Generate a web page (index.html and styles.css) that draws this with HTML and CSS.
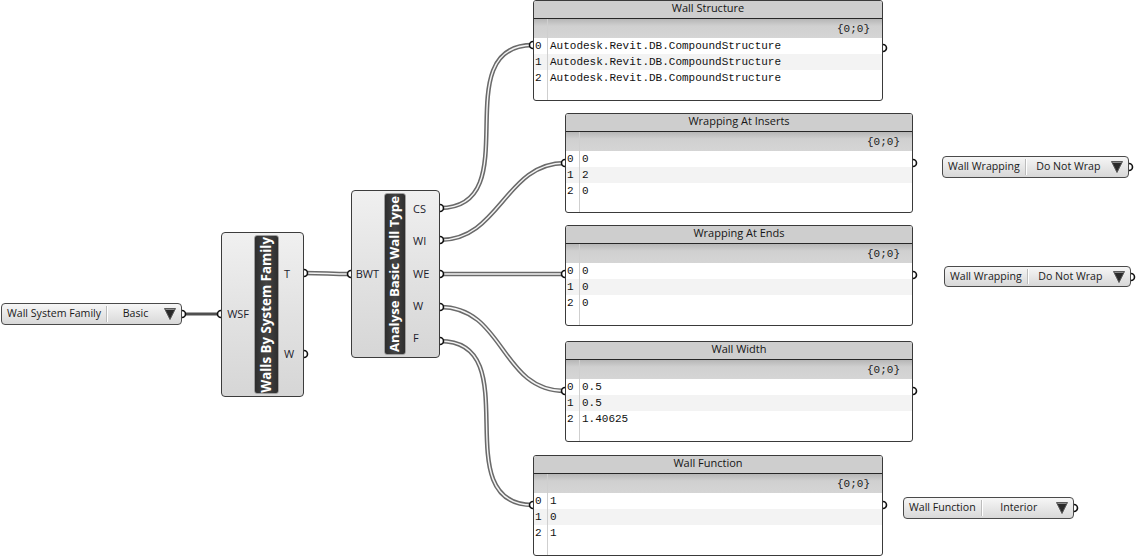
FILE: index.html
```html
<!DOCTYPE html>
<html>
<head>
<meta charset="utf-8">
<link rel="stylesheet" href="styles.css">
</head>
<body>
<div class="canvas">
  <svg class="layer wires" width="1137" height="556" viewBox="0 0 1137 556">
    <path class="w-single" d="M182,314 L220,314"/>
    <g class="w-outer">
      <path d="M304,273 C327,273 328,274 351,274"/>
      <path d="M440,208 C530,208 443,45 533,45"/>
      <path d="M440,240 C500,240 505,163 565,163"/>
      <path d="M440,274 L565,274"/>
      <path d="M440,307 C505,307 500,391 565,391"/>
      <path d="M440,341 C530,341 443,505 533,505"/>
    </g>
    <g class="w-inner">
      <path d="M304,273 C327,273 328,274 351,274"/>
      <path d="M440,208 C530,208 443,45 533,45"/>
      <path d="M440,240 C500,240 505,163 565,163"/>
      <path d="M440,274 L565,274"/>
      <path d="M440,307 C505,307 500,391 565,391"/>
      <path d="M440,341 C530,341 443,505 533,505"/>
    </g>
  </svg>

  <div class="node vlist v-wsf">
    <span class="v-name">Wall System Family</span>
    <span class="v-sep"></span>
    <span class="v-val">Basic</span>
    <svg class="v-tri" viewBox="0 0 12 12"><polygon points="0.5,0.5 11.5,0.5 6,11.5"/><polyline points="1.5,1.5 10.5,1.5"/></svg>
  </div>

  <div class="node comp c-wbsf">
    <div class="c-in"><span>WSF</span></div>
    <div class="c-label"><span>Walls By System Family</span></div>
    <div class="c-out"><span>T</span><span>W</span></div>
  </div>

  <div class="node comp c-abwt">
    <div class="c-in"><span>BWT</span></div>
    <div class="c-label"><span>Analyse Basic Wall Type</span></div>
    <div class="c-out"><span>CS</span><span>WI</span><span>WE</span><span>W</span><span>F</span></div>
  </div>

  <div class="node panel p-structure">
    <div class="p-title">Wall Structure</div>
    <div class="p-path"><span class="p-idx"></span><span class="p-pathtxt">{0;0}</span></div>
    <div class="p-row"><span class="p-idx">0</span><span class="p-val">Autodesk.Revit.DB.CompoundStructure</span></div>
    <div class="p-row"><span class="p-idx">1</span><span class="p-val">Autodesk.Revit.DB.CompoundStructure</span></div>
    <div class="p-row"><span class="p-idx">2</span><span class="p-val">Autodesk.Revit.DB.CompoundStructure</span></div>
    <div class="p-row p-fill"><span class="p-idx"></span></div>
  </div>

  <div class="node panel p-inserts">
    <div class="p-title">Wrapping At Inserts</div>
    <div class="p-path"><span class="p-idx"></span><span class="p-pathtxt">{0;0}</span></div>
    <div class="p-row"><span class="p-idx">0</span><span class="p-val">0</span></div>
    <div class="p-row"><span class="p-idx">1</span><span class="p-val">2</span></div>
    <div class="p-row"><span class="p-idx">2</span><span class="p-val">0</span></div>
    <div class="p-row p-fill"><span class="p-idx"></span></div>
  </div>

  <div class="node panel p-ends">
    <div class="p-title">Wrapping At Ends</div>
    <div class="p-path"><span class="p-idx"></span><span class="p-pathtxt">{0;0}</span></div>
    <div class="p-row"><span class="p-idx">0</span><span class="p-val">0</span></div>
    <div class="p-row"><span class="p-idx">1</span><span class="p-val">0</span></div>
    <div class="p-row"><span class="p-idx">2</span><span class="p-val">0</span></div>
    <div class="p-row p-fill"><span class="p-idx"></span></div>
  </div>

  <div class="node panel p-width">
    <div class="p-title">Wall Width</div>
    <div class="p-path"><span class="p-idx"></span><span class="p-pathtxt">{0;0}</span></div>
    <div class="p-row"><span class="p-idx">0</span><span class="p-val">0.5</span></div>
    <div class="p-row"><span class="p-idx">1</span><span class="p-val">0.5</span></div>
    <div class="p-row"><span class="p-idx">2</span><span class="p-val">1.40625</span></div>
    <div class="p-row p-fill"><span class="p-idx"></span></div>
  </div>

  <div class="node panel p-function">
    <div class="p-title">Wall Function</div>
    <div class="p-path"><span class="p-idx"></span><span class="p-pathtxt">{0;0}</span></div>
    <div class="p-row"><span class="p-idx">0</span><span class="p-val">1</span></div>
    <div class="p-row"><span class="p-idx">1</span><span class="p-val">0</span></div>
    <div class="p-row"><span class="p-idx">2</span><span class="p-val">1</span></div>
    <div class="p-row p-fill"><span class="p-idx"></span></div>
  </div>

  <div class="node vlist v-wrap1">
    <span class="v-name">Wall Wrapping</span>
    <span class="v-sep"></span>
    <span class="v-val">Do Not Wrap</span>
    <svg class="v-tri" viewBox="0 0 12 12"><polygon points="0.5,0.5 11.5,0.5 6,11.5"/><polyline points="1.5,1.5 10.5,1.5"/></svg>
  </div>

  <div class="node vlist v-wrap2">
    <span class="v-name">Wall Wrapping</span>
    <span class="v-sep"></span>
    <span class="v-val">Do Not Wrap</span>
    <svg class="v-tri" viewBox="0 0 12 12"><polygon points="0.5,0.5 11.5,0.5 6,11.5"/><polyline points="1.5,1.5 10.5,1.5"/></svg>
  </div>

  <div class="node vlist v-func">
    <span class="v-name">Wall Function</span>
    <span class="v-sep"></span>
    <span class="v-val">Interior</span>
    <svg class="v-tri" viewBox="0 0 12 12"><polygon points="0.5,0.5 11.5,0.5 6,11.5"/><polyline points="1.5,1.5 10.5,1.5"/></svg>
  </div>

  <svg class="layer grips" width="1137" height="556" viewBox="0 0 1137 556">
    <g class="g-out">
      <path d="M182,310.5 a3.5,3.5 0 0 1 0,7"/>
      <path d="M304,269.5 a3.5,3.5 0 0 1 0,7"/>
      <path d="M304,350.5 a3.5,3.5 0 0 1 0,7"/>
      <path d="M440,204.5 a3.5,3.5 0 0 1 0,7"/>
      <path d="M440,236.5 a3.5,3.5 0 0 1 0,7"/>
      <path d="M440,270.5 a3.5,3.5 0 0 1 0,7"/>
      <path d="M440,303.5 a3.5,3.5 0 0 1 0,7"/>
      <path d="M440,337.5 a3.5,3.5 0 0 1 0,7"/>
      <path d="M883,44.5 a3.5,3.5 0 0 1 0,7"/>
      <path d="M913,159.5 a3.5,3.5 0 0 1 0,7"/>
      <path d="M913,271.5 a3.5,3.5 0 0 1 0,7"/>
      <path d="M913,387.5 a3.5,3.5 0 0 1 0,7"/>
      <path d="M883,501.5 a3.5,3.5 0 0 1 0,7"/>
      <path d="M1129,163.5 a3.5,3.5 0 0 1 0,7"/>
      <path d="M1131,273.5 a3.5,3.5 0 0 1 0,7"/>
      <path d="M1074,504.5 a3.5,3.5 0 0 1 0,7"/>
    </g>
    <g class="g-in">
      <path d="M221,310.5 a3.5,3.5 0 0 0 0,7"/>
      <path d="M351,270.5 a3.5,3.5 0 0 0 0,7"/>
      <path d="M533,41.5 a3.5,3.5 0 0 0 0,7"/>
      <path d="M565,159.5 a3.5,3.5 0 0 0 0,7"/>
      <path d="M565,270.5 a3.5,3.5 0 0 0 0,7"/>
      <path d="M565,387.5 a3.5,3.5 0 0 0 0,7"/>
      <path d="M533,501.5 a3.5,3.5 0 0 0 0,7"/>
    </g>
  </svg>
</div>
</body>
</html>
```

FILE: styles.css
```css
html, body {
  margin: 0;
  padding: 0;
  background: #ffffff;
}

body {
  font-family: "Open Sans", "Noto Sans", sans-serif;
  color: #1a1a1a;
}

.canvas {
  position: relative;
  width: 1137px;
  height: 556px;
  overflow: hidden;
  background: #ffffff;
}

.layer {
  position: absolute;
  left: 0;
  top: 0;
  pointer-events: none;
}

.wires { z-index: 0; }
.grips { z-index: 3; }

.wires path {
  fill: none;
  stroke-linecap: butt;
}

.w-single {
  stroke: #4f4f4f;
  stroke-width: 3;
}

.w-outer path {
  stroke: #6a6a6a;
  stroke-width: 4.5;
}

.w-inner path {
  stroke: #f4f4f4;
  stroke-width: 1.4;
}

.grips path {
  fill: #ffffff;
  stroke: #111111;
  stroke-width: 1.6;
}

.node {
  position: absolute;
  box-sizing: border-box;
  z-index: 1;
}

/* ---------- value lists ---------- */
.vlist {
  display: flex;
  align-items: center;
  height: 22px;
  padding-bottom: 2px;
  border: 1px solid #4a4a4a;
  border-radius: 4px;
  background: linear-gradient(#f6f6f6, #e4e4e4 60%, #d8d8d8);
  font-size: 10.6px;
  color: #1a1a1a;
  white-space: nowrap;
}

.v-name {
  padding: 0 5px 0 5px;
}

.v-sep {
  align-self: stretch;
  width: 1px;
  margin: 2px 0 0 0;
  background: #bcbcbc;
  box-shadow: 1px 0 0 #ffffff;
}

.v-val {
  flex: 1;
  text-align: center;
}

.v-tri {
  width: 12px;
  height: 12px;
  margin-right: 5px;
  margin-top: 2px;
  flex: none;
}

.v-tri polygon {
  fill: #2a2a2a;
  stroke: #5a5a5a;
  stroke-width: 1;
  stroke-linejoin: round;
}

.v-tri polyline {
  fill: none;
  stroke: #8a8a8a;
  stroke-width: 1;
}

.v-wsf { left: 1px; top: 303px; width: 181px; }
.v-wrap1 { left: 942px; top: 156px; width: 187px; }
.v-wrap2 { left: 944px; top: 266px; width: 187px; height: 21px; }
.v-func { left: 903px; top: 497px; width: 171px; }

/* ---------- components ---------- */
.comp {
  display: flex;
  border: 1px solid #3c3c3c;
  border-radius: 4px;
  background: linear-gradient(#f0f0f0, #e2e2e2 50%, #d6d6d6);
  padding: 2px 0;
  font-size: 11px;
  color: #1c1c2c;
}

.c-in {
  width: 32px;
  flex: none;
  display: flex;
  flex-direction: column;
  justify-content: center;
  align-items: flex-end;
  padding-right: 5px;
  padding-bottom: 2px;
  box-sizing: border-box;
}

.c-label {
  flex: none;
  box-sizing: border-box;
  border: 1px solid #a0a0a0;
  border-radius: 3px;
  background: linear-gradient(to right, #2e2e2e, #444444 50%, #2e2e2e);
  display: flex;
  align-items: center;
  justify-content: center;
  overflow: hidden;
}

.c-label span {
  writing-mode: vertical-rl;
  transform: rotate(180deg);
  color: #ffffff;
  font-weight: bold;
  font-size: 13.4px;
  line-height: 1;
  white-space: nowrap;
}

.c-out {
  flex: 1;
  display: flex;
  flex-direction: column;
}

.c-out span {
  flex: 1;
  display: flex;
  align-items: center;
  padding-left: 5px;
  padding-bottom: 2px;
}

.c-wbsf { left: 221px; top: 232px; width: 83px; height: 165px; }
.c-wbsf .c-label { width: 25px; }

.c-abwt { left: 351px; top: 190px; width: 89px; height: 168px; }
.c-abwt .c-label { width: 22px; }
.c-abwt .c-label span { font-size: 13.2px; }
.c-abwt .c-out span { padding-left: 7px; }

/* ---------- panels ---------- */
.panel {
  display: flex;
  flex-direction: column;
  border: 1px solid #3a3a3a;
  border-radius: 3px;
  background: #ffffff;
  overflow: hidden;
  height: 101px;
}

.p-title {
  flex: none;
  height: 18px;
  box-sizing: border-box;
  padding-bottom: 4px;
  border-bottom: 1px solid #262626;
  background: #cecece;
  text-align: center;
  font-size: 11px;
  line-height: 13px;
  color: #151515;
}

.p-path {
  flex: none;
  height: 19px;
  display: flex;
  background: linear-gradient(#b6b6b6, #d0d0d0 7px, #d5d5d5);
  font-family: "Liberation Mono", "DejaVu Sans Mono", monospace;
  font-size: 11px;
  line-height: 20px;
  color: #1a1a1a;
}

.p-pathtxt {
  flex: 1;
  text-align: right;
  padding-right: 12px;
}

.p-idx {
  flex: none;
  width: 14px;
  box-sizing: border-box;
  border-right: 1px solid #cfcfcf;
  padding-left: 1px;
}

.p-row {
  flex: none;
  height: 16px;
  display: flex;
  font-family: "Liberation Mono", "DejaVu Sans Mono", monospace;
  font-size: 11px;
  line-height: 16px;
  color: #111111;
  white-space: nowrap;
}

.p-row:nth-child(4) {
  background: #f3f3f3;
}

.p-val {
  padding-left: 2px;
}

.p-fill {
  flex: 1;
  height: auto;
}

.p-structure { left: 533px; top: 0px; width: 350px; }
.p-inserts { left: 565px; top: 113px; width: 348px; height: 100px; }
.p-ends { left: 565px; top: 225px; width: 348px; height: 101px; }
.p-width { left: 565px; top: 341px; width: 348px; height: 101px; }
.p-function { left: 533px; top: 455px; width: 350px; height: 101px; }
```
